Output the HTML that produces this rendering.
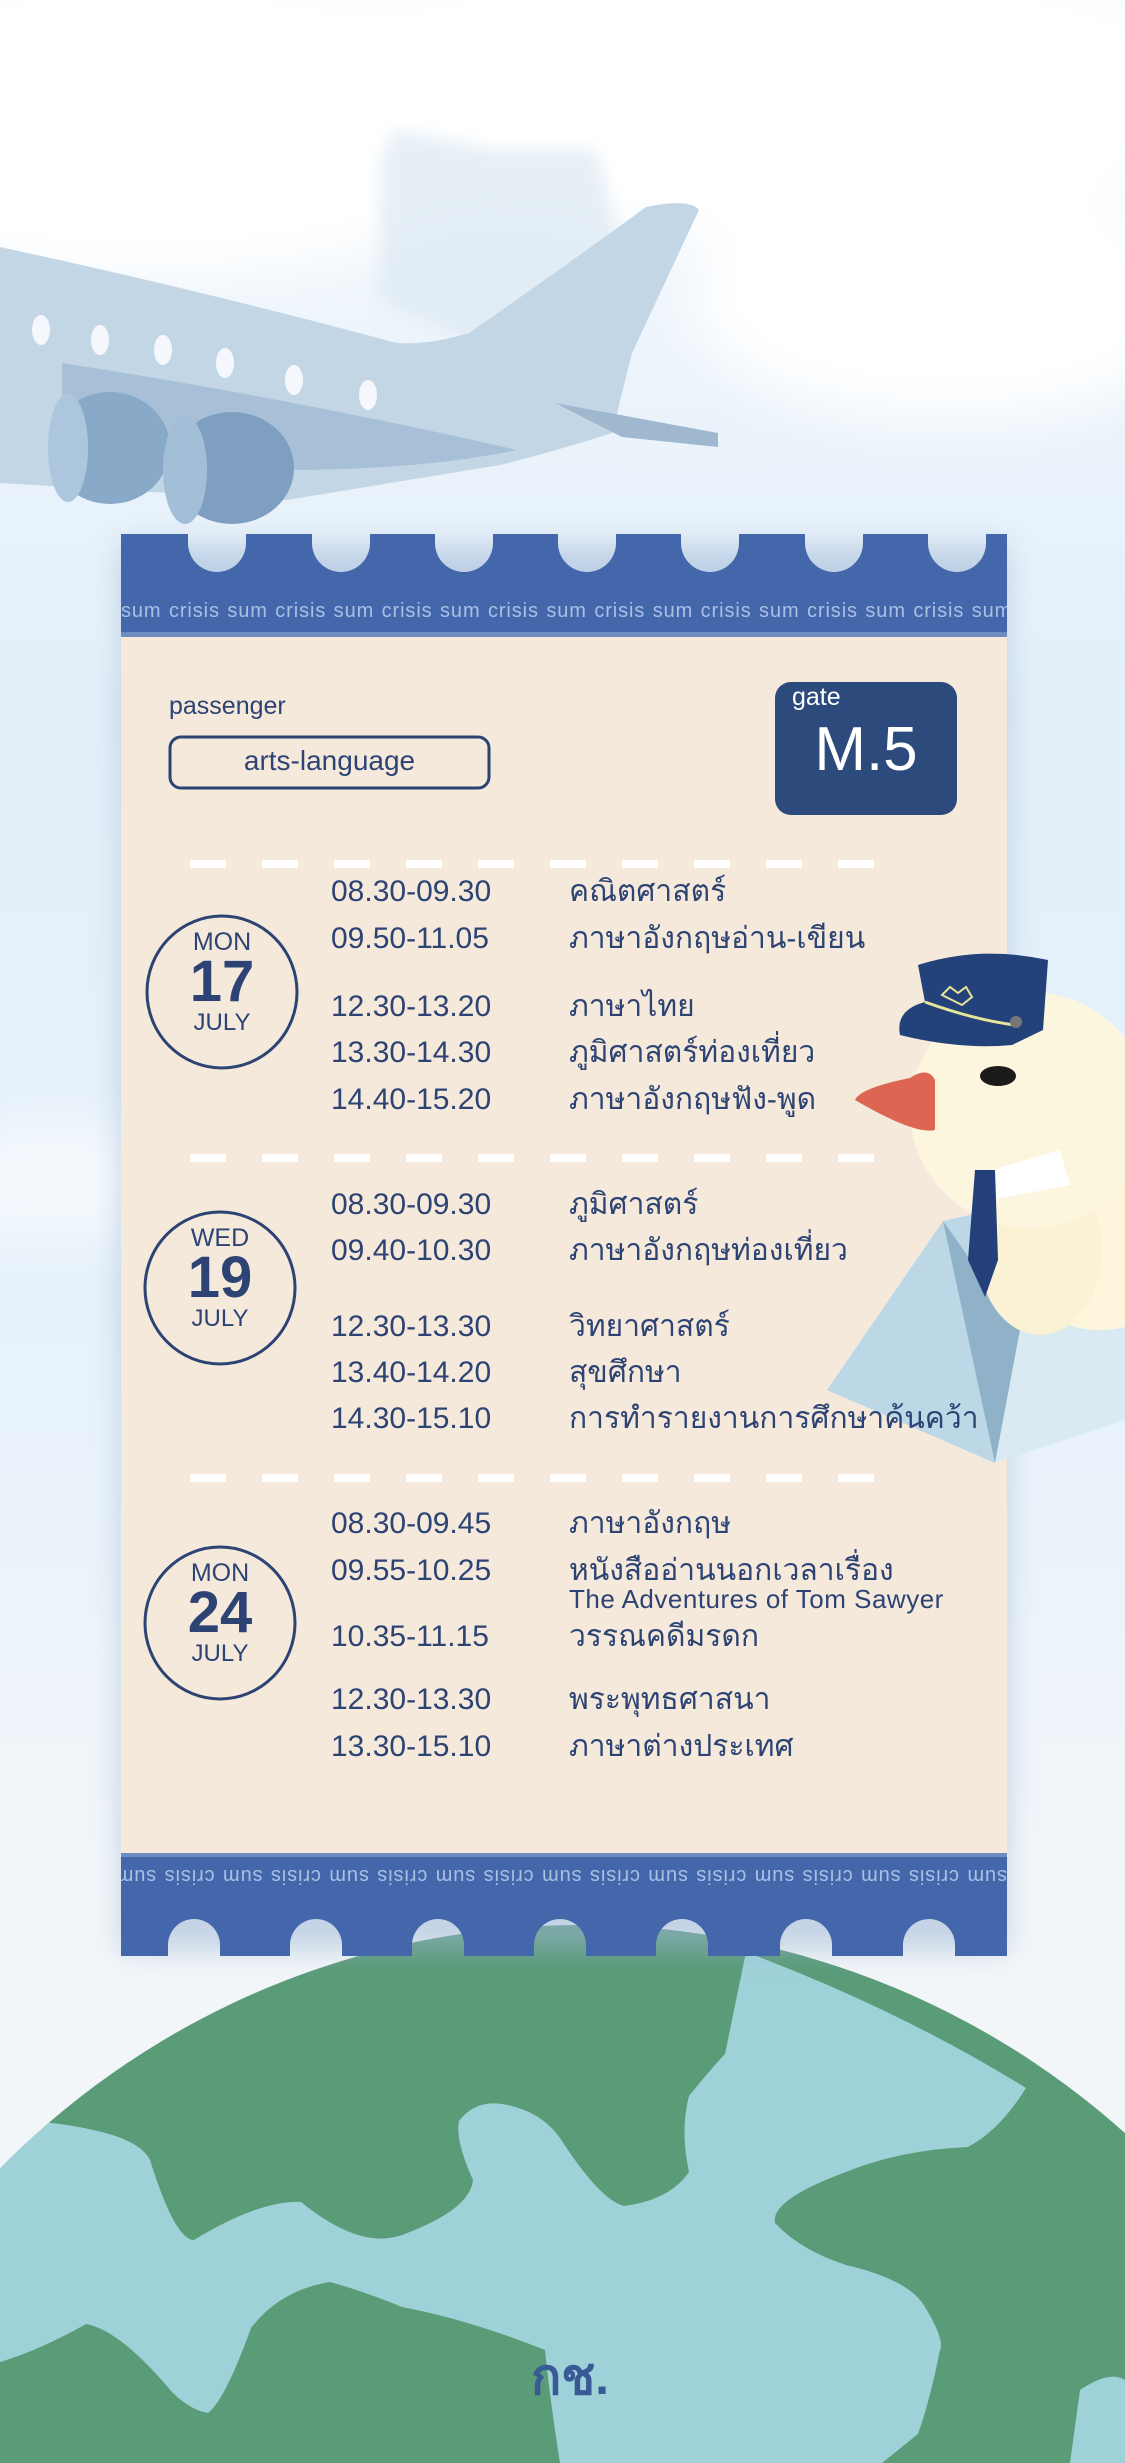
<!DOCTYPE html>
<html><head><meta charset="utf-8"><style>
*{margin:0;padding:0;box-sizing:border-box}
body{width:1125px;height:2463px;overflow:hidden;position:relative;font-family:"Liberation Sans","Noto Sans CJK SC",sans-serif;color:#2c4373;background:linear-gradient(#f4f7fa 0,#eef5fb 300px,#e3eff9 700px,#e6f1fa 1300px,#f2f6f9 1900px,#f4f6f8 2463px)}
.a{position:absolute;white-space:nowrap}
.t{font-size:30px;line-height:36px}
.band{font-size:20px;color:#a9c0e4;letter-spacing:0.9px;word-spacing:1px}
</style></head><body>
<svg class="a" style="left:0;top:0" width="1125" height="2463" viewBox="0 0 1125 2463">
<defs>
<mask id="mt"><rect x="0" y="0" width="1125" height="2463" fill="#fff"/>
<g fill="#000">
<circle cx="217" cy="543" r="29"/><circle cx="341" cy="543" r="29"/><circle cx="464" cy="543" r="29"/><circle cx="587" cy="543" r="29"/><circle cx="710" cy="543" r="29"/><circle cx="834" cy="543" r="29"/><circle cx="957" cy="543" r="29"/>
<rect x="188" y="520" width="58" height="23"/><rect x="312" y="520" width="58" height="23"/><rect x="435" y="520" width="58" height="23"/><rect x="558" y="520" width="58" height="23"/><rect x="681" y="520" width="58" height="23"/><rect x="805" y="520" width="58" height="23"/><rect x="928" y="520" width="58" height="23"/>
<circle cx="194" cy="1945" r="26"/><circle cx="316" cy="1945" r="26"/><circle cx="438" cy="1945" r="26"/><circle cx="560" cy="1945" r="26"/><circle cx="682" cy="1945" r="26"/><circle cx="806" cy="1945" r="26"/><circle cx="929" cy="1945" r="26"/>
<rect x="168" y="1945" width="52" height="20"/><rect x="290" y="1945" width="52" height="20"/><rect x="412" y="1945" width="52" height="20"/><rect x="534" y="1945" width="52" height="20"/><rect x="656" y="1945" width="52" height="20"/><rect x="780" y="1945" width="52" height="20"/><rect x="903" y="1945" width="52" height="20"/>
</g></mask>
<filter id="bl"><feGaussianBlur stdDeviation="14"/></filter>
<filter id="bl2"><feGaussianBlur stdDeviation="30"/></filter>
<filter id="bl3"><feGaussianBlur stdDeviation="8"/></filter>
<clipPath id="gc"><circle cx="581" cy="2740" r="815"/></clipPath>
</defs>
<g filter="url(#bl2)" fill="#fff">
<ellipse cx="150" cy="120" rx="400" ry="160"/><ellipse cx="750" cy="90" rx="500" ry="150"/><ellipse cx="950" cy="300" rx="260" ry="120"/>
<ellipse cx="60" cy="1180" rx="140" ry="60" opacity=".6"/>
</g>
<path d="M380 160 L395 130 L500 150 L595 150 L605 180 L620 250 L560 330 L470 340 L380 300 Z" fill="#dce8f2" opacity=".7" filter="url(#bl3)"/>
<g>
<path d="M0 247 Q200 290 397 343 Q430 345 469 333 Q560 270 646 207 Q690 198 699 210 L632 353 L612 433 Q560 450 500 465 L287 500 L0 483 Z" fill="#c3d6e6"/>
<path d="M62 363 Q300 400 517 450 Q420 470 287 470 Q150 440 62 400 Z" fill="#a7c0d7"/>
<path d="M555 403 L718 433 L718 447 L622 437 Z" fill="#9fb8d0"/>
<ellipse cx="110" cy="448" rx="60" ry="56" fill="#88a9c8"/><ellipse cx="68" cy="448" rx="20" ry="54" fill="#acc6dd"/>
<ellipse cx="232" cy="468" rx="62" ry="56" fill="#7f9fc0"/><ellipse cx="185" cy="470" rx="22" ry="54" fill="#a3bfd8"/>
<g fill="#f4f8fc"><ellipse cx="41" cy="330" rx="9" ry="15"/><ellipse cx="100" cy="340" rx="9" ry="15"/><ellipse cx="163" cy="350" rx="9" ry="15"/><ellipse cx="225" cy="363" rx="9" ry="15"/><ellipse cx="294" cy="380" rx="9" ry="15"/><ellipse cx="368" cy="395" rx="9" ry="15"/></g>
</g>
<g clip-path="url(#gc)">
<rect x="0" y="1900" width="1125" height="600" fill="#5a9b78"/>
<path d="M746 1952 Q900 2010 1026 2088 Q1000 2130 968 2147 Q900 2150 846 2172 Q770 2200 775 2223 Q800 2250 846 2265 Q910 2280 925 2307 Q945 2340 940 2350 Q930 2400 918 2434 L882 2463 L560 2463 Q550 2400 545 2350 Q470 2320 402 2307 Q360 2290 330 2282 Q280 2290 251 2328 Q225 2400 208 2413 Q190 2410 172 2392 Q120 2330 86 2324 Q40 2350 0 2362 L0 2121 Q50 2120 93 2130 Q140 2140 150 2160 Q175 2240 194 2240 Q260 2200 301 2202 Q360 2250 402 2235 Q470 2210 473 2180 Q455 2140 459 2121 Q475 2100 502 2104 Q540 2110 560 2138 Q600 2200 624 2206 Q670 2200 689 2172 Q680 2130 689 2096 Q710 2070 725 2054 Z" fill="#9fd2d8"/>
<path d="M1080 2390 Q1110 2370 1125 2380 L1125 2463 L1070 2463 Z" fill="#9fd2d8"/>
</g>
<rect x="121" y="545" width="886" height="1405" fill="#9db6d6" opacity=".55" filter="url(#bl)"/>
<rect x="121" y="636" width="886" height="1219" fill="#f5e9dc"/>
<g mask="url(#mt)">
<rect x="121" y="534" width="886" height="102" fill="#4467ab"/>
<rect x="121" y="1855" width="886" height="101" fill="#4467ab"/>
</g>
<rect x="121" y="632" width="886" height="5" fill="#6f8cc2"/>
<rect x="121" y="1853" width="886" height="4" fill="#6f8cc2"/>
<g stroke="#fff" stroke-width="8" stroke-dasharray="36 36">
<line x1="190" y1="864" x2="890" y2="864"/><line x1="190" y1="1158" x2="890" y2="1158"/><line x1="190" y1="1478" x2="890" y2="1478"/>
</g>
<g fill="none" stroke="#2c4373" stroke-width="3">
<ellipse cx="222" cy="992" rx="75" ry="76"/><ellipse cx="220" cy="1288" rx="75" ry="76"/><ellipse cx="220" cy="1623" rx="75" ry="76"/>
</g>
<rect x="775" y="682" width="182" height="133" rx="16" fill="#2d4a7d"/>
<rect x="170" y="737" width="319" height="51" rx="11" fill="none" stroke="#2c4373" stroke-width="3"/>
<path d="M827 1390 L943 1221 L1125 1180 L1125 1400 L995 1463 Z" fill="#bcd8e6"/>
<path d="M943 1221 L995 1463 L1020 1330 Z" fill="#8fb2c8"/>
<path d="M1020 1330 L1125 1300 L1125 1420 L995 1463 Z" fill="#d9eaf2"/>
<ellipse cx="1100" cy="1230" rx="100" ry="100" fill="#fdf5dc"/>
<ellipse cx="1040" cy="1250" rx="62" ry="85" fill="#fbf2d6"/>
<ellipse cx="1030" cy="1110" rx="120" ry="118" fill="#fdf6de"/>
<path d="M975 1175 L1060 1150 L1070 1185 L990 1200 Z" fill="#fff"/>
<path d="M975 1170 L995 1170 L998 1260 L985 1297 L968 1260 Z" fill="#23407a"/>
<path d="M910 1078 Q928 1066 935 1080 L935 1130 Q915 1135 855 1100 Q860 1088 910 1078 Z" fill="#dd6653"/>
<ellipse cx="998" cy="1076" rx="18" ry="10" fill="#1b1b1b"/>
<path d="M918 965 Q980 945 1048 960 L1043 1030 L1012 1045 Q960 1050 900 1035 Q895 1010 925 1002 Z" fill="#24427a"/>
<path d="M925 1002 Q975 1020 1015 1025" stroke="#e7e49b" stroke-width="3" fill="none"/>
<circle cx="1016" cy="1022" r="6" fill="#777"/>
<path d="M942 995 l8 -8 l8 6 l8 -6 l6 10 l-10 8 z" fill="none" stroke="#e7e49b" stroke-width="2"/>
</svg>
<div class="a band" style="left:121px;top:600px;width:886px;overflow:hidden">sum crisis sum crisis sum crisis sum crisis sum crisis sum crisis sum crisis sum crisis sum</div>
<div class="a band" style="left:121px;top:1864px;width:886px;overflow:hidden;transform:rotate(180deg)">sum crisis sum crisis sum crisis sum crisis sum crisis sum crisis sum crisis sum crisis sum</div>
<div class="a" style="left:169px;top:692px;font-size:25px">passenger</div>
<div class="a" style="left:170px;top:745px;width:319px;text-align:center;font-size:28px">arts-language</div>
<div class="a" style="left:792px;top:683px;font-size:25px;color:#fff">gate</div>
<div class="a" style="left:775px;top:714px;width:182px;text-align:center;font-size:62px;color:#fff">M.5</div>
<div class="a" style="left:147px;top:930px;width:150px;text-align:center;line-height:1"><div style="font-size:25px">MON</div><div style="font-size:58px;font-weight:bold;margin-top:-2px">17</div><div style="font-size:24px">JULY</div></div>
<div class="a" style="left:145px;top:1226px;width:150px;text-align:center;line-height:1"><div style="font-size:25px">WED</div><div style="font-size:58px;font-weight:bold;margin-top:-2px">19</div><div style="font-size:24px">JULY</div></div>
<div class="a" style="left:145px;top:1561px;width:150px;text-align:center;line-height:1"><div style="font-size:25px">MON</div><div style="font-size:58px;font-weight:bold;margin-top:-2px">24</div><div style="font-size:24px">JULY</div></div>
<div class="a t" style="left:331px;top:874px">08.30-09.30</div><div class="a t" style="left:569px;top:874px">คณิตศาสตร์</div>
<div class="a t" style="left:331px;top:921px">09.50-11.05</div><div class="a t" style="left:569px;top:921px">ภาษาอังกฤษอ่าน-เขียน</div>
<div class="a t" style="left:331px;top:989px">12.30-13.20</div><div class="a t" style="left:569px;top:989px">ภาษาไทย</div>
<div class="a t" style="left:331px;top:1035px">13.30-14.30</div><div class="a t" style="left:569px;top:1035px">ภูมิศาสตร์ท่องเที่ยว</div>
<div class="a t" style="left:331px;top:1082px">14.40-15.20</div><div class="a t" style="left:569px;top:1082px">ภาษาอังกฤษฟัง-พูด</div>
<div class="a t" style="left:331px;top:1187px">08.30-09.30</div><div class="a t" style="left:569px;top:1187px">ภูมิศาสตร์</div>
<div class="a t" style="left:331px;top:1233px">09.40-10.30</div><div class="a t" style="left:569px;top:1233px">ภาษาอังกฤษท่องเที่ยว</div>
<div class="a t" style="left:331px;top:1309px">12.30-13.30</div><div class="a t" style="left:569px;top:1309px">วิทยาศาสตร์</div>
<div class="a t" style="left:331px;top:1355px">13.40-14.20</div><div class="a t" style="left:569px;top:1355px">สุขศึกษา</div>
<div class="a t" style="left:331px;top:1401px">14.30-15.10</div><div class="a t" style="left:569px;top:1401px">การทำรายงานการศึกษาค้นคว้า</div>
<div class="a t" style="left:331px;top:1506px">08.30-09.45</div><div class="a t" style="left:569px;top:1506px">ภาษาอังกฤษ</div>
<div class="a t" style="left:331px;top:1553px">09.55-10.25</div><div class="a t" style="left:569px;top:1553px">หนังสืออ่านนอกเวลาเรื่อง</div>
<div class="a" style="left:569px;top:1584px;font-size:26px;letter-spacing:0.5px">The Adventures of Tom Sawyer</div>
<div class="a t" style="left:331px;top:1619px">10.35-11.15</div><div class="a t" style="left:569px;top:1619px">วรรณคดีมรดก</div>
<div class="a t" style="left:331px;top:1682px">12.30-13.30</div><div class="a t" style="left:569px;top:1682px">พระพุทธศาสนา</div>
<div class="a t" style="left:331px;top:1729px">13.30-15.10</div><div class="a t" style="left:569px;top:1729px">ภาษาต่างประเทศ</div>
<div class="a" style="left:530px;top:2338px;width:80px;text-align:center;font-size:50px;font-weight:bold;color:#3a5a96">กช.</div>
</body></html>
